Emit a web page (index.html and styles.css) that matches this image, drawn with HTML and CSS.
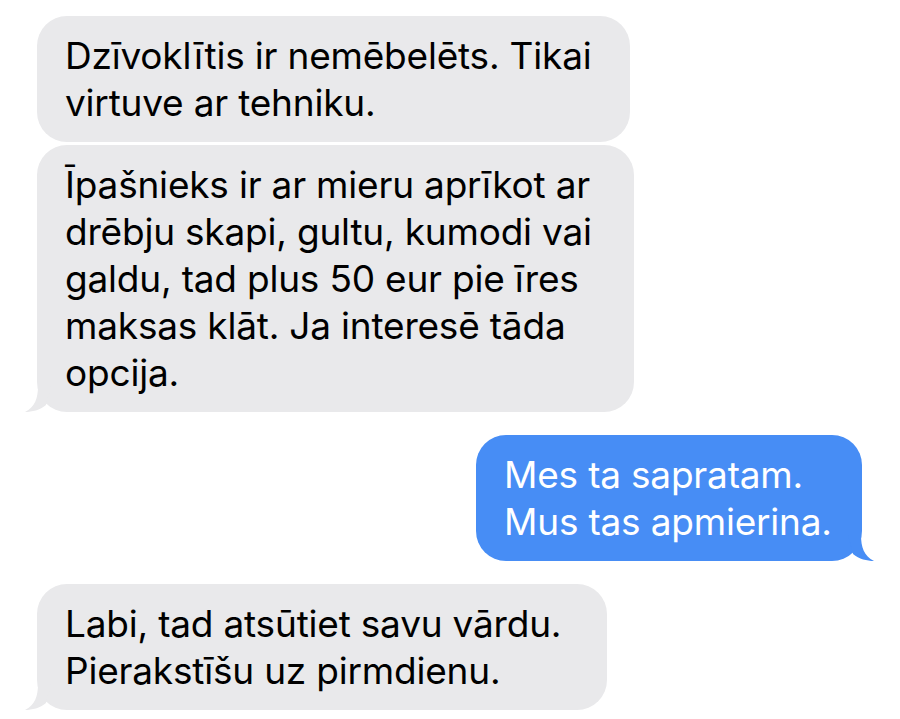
FILE: index.html
```html
<!DOCTYPE html>
<html>
<head>
  <link rel="stylesheet" href="styles.css">
</head>
<body>

  <div class="chat">
    <div class="msg them first">
      Dzīvoklītis ir nemēbelēts. Tikai<br>virtuve ar tehniku.
    </div>

    <div class="msg them follow">
      Īpašnieks ir ar mieru aprīkot ar<br>drēbju skapi, gultu, kumodi vai<br>galdu, tad plus 50 eur pie īres<br>maksas klāt. Ja interesē tāda<br>opcija.
      <svg class="tail-icon" viewBox="0 0 26 26" width="26" height="26">
        <path d="M13 0 C13 12 10 21 0 26 C7 26 15 24 21 19 L26 0 Z"/>
      </svg>
    </div>

    <div class="msg me">
      Mes ta sapratam.<br>Mus tas apmierina.
      <svg class="tail-icon" viewBox="0 0 26 26" width="26" height="26">
        <path d="M13 0 C13 12 16 21 26 26 C19 26 11 24 5 19 L0 0 Z"/>
      </svg>
    </div>

    <div class="msg them last">
      Labi, tad atsūtiet savu vārdu.<br>Pierakstīšu uz pirmdienu.
      <svg class="tail-icon" viewBox="0 0 26 26" width="26" height="26">
        <path d="M13 0 C13 12 10 21 0 26 C7 26 15 24 21 19 L26 0 Z"/>
      </svg>
    </div>
  </div>

</body>
</html>
```

FILE: styles.css
```css
body {
  margin: 0;
  background: #fff;
  font-family: Inter, "Noto Sans", sans-serif;
}

.chat {
  display: flex;
  flex-direction: column;
  gap: 23px;
  padding: 16px 38px 0 37px;
}

.msg {
  position: relative;
  box-sizing: border-box;
  width: fit-content;
  padding: 16px 28px;
  border-radius: 30px;
  font-size: 37px;
  line-height: 47px;
  letter-spacing: -0.2px;
}

.them {
  align-self: flex-start;
  background: #e9e9eb;
  color: #000;
}

.them.first {
  width: 593px;
}

.them.follow {
  width: 597px;
  margin-top: -20px;
}

.them.last {
  width: 570px;
}

.me {
  align-self: flex-end;
  width: 386px;
  background: #478df5;
  color: #fff;
}

.tail-icon {
  position: absolute;
  bottom: 0;
}

.them .tail-icon {
  left: -12px;
  fill: #e9e9eb;
}

.me .tail-icon {
  right: -12px;
  fill: #478df5;
}
```
